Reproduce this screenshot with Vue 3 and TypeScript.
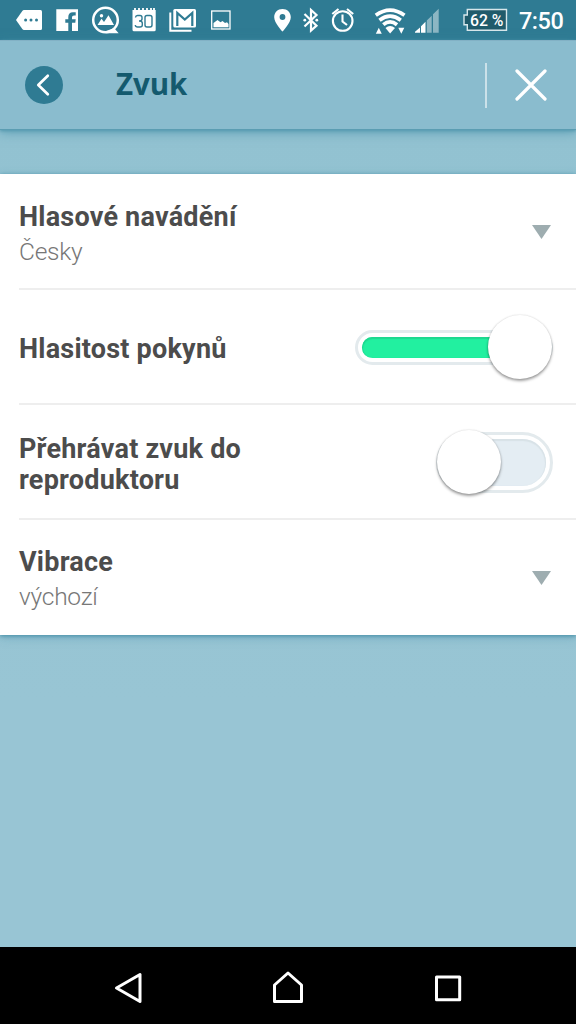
<script setup lang="ts">
import { ref } from 'vue'

interface Setting {
  id: string
  label: string
  value?: string
  kind: 'select' | 'slider' | 'toggle'
}

const settings = ref<Setting[]>([
  { id: 'voice', label: 'Hlasové navádění', value: 'Česky', kind: 'select' },
  { id: 'volume', label: 'Hlasitost pokynů', kind: 'slider' },
  { id: 'speaker', label: 'Přehrávat zvuk do reproduktoru', kind: 'toggle' },
  { id: 'vibration', label: 'Vibrace', value: 'výchozí', kind: 'select' },
])
</script>

<template>
  <div class="screen">
    <div class="status">
      <svg class="ic" width="250" height="40" viewBox="0 0 250 40" fill="#fff">
        <!-- message tag -->
        <path d="M24 10H40.500Q42 10 42 11.500V28.500Q42 30 40.500 30H24Q23 30 22.300 29L16 20L22.300 11Q23 10 24 10Z" />
        <g fill="#2f7b93"><circle cx="25.600" cy="20" r="1.500" /><circle cx="31" cy="20" r="1.500" /><circle cx="36.500" cy="20" r="1.500" /></g>
        <!-- facebook -->
        <path fill-rule="evenodd" d="M56.300 9.300H78V31H56.300ZM68.300 31H72V22.800H75.300L75.700 19.300H72V17.300Q72 15.500 74 15.500H75.700V12.300H73Q68.300 12.300 68.300 17V19.300H65.300V22.800H68.300Z" />
        <!-- photo bubble -->
        <circle cx="105.500" cy="20" r="12.300" fill="none" stroke="#fff" stroke-width="2.500" />
        <path d="M105 31.500L114 28L118.700 33.300H106Z" />
        <circle cx="101.500" cy="15.800" r="1.700" />
        <path d="M97.500 25L101.500 18.800L104 22L108.500 15.300L114 25Z" />
        <!-- calendar -->
        <path d="M132.500 10H155.700V29.700Q155.700 31.200 154.200 31.200H134Q132.500 31.200 132.500 29.700Z" />
        <path d="M135 8V12M139 8V12M143 8V12M147 8V12M151 8V12M154 8V12" stroke="#fff" stroke-width="1.800" />
        <g fill="none" stroke="#2f7b93" stroke-width="1.400">
          <path d="M135.500 17.500Q135.700 15.500 137.500 15.500H140Q142 15.500 142 17.500V19Q142 21 139 21Q142.300 21 142.300 23V25Q142.300 27 140 27H137.500Q135.500 27 135.300 25" />
          <rect x="145" y="15.500" width="7" height="11.500" rx="2" />
        </g>
        <!-- mail -->
        <rect x="173.300" y="9" width="22.700" height="18.600" rx="1.500" />
        <path d="M170.300 12.500V30.700H191.500" fill="none" stroke="#fff" stroke-width="2" />
        <path d="M177.300 26V13L184.800 19.500L192.300 13V26" fill="none" stroke="#2f7b93" stroke-width="2.200" />
        <!-- picture -->
        <rect x="211.700" y="11" width="18.300" height="18" fill="none" stroke="#fff" stroke-width="1.300" />
        <path d="M213.500 27.300V23L217.500 20L220.500 22.300L222.500 21L225 23L227 22.200L228.500 24V27.300Z" />
      </svg>
      <svg class="ic" width="262" height="40" viewBox="250 0 262 40" fill="#fff">
        <!-- location -->
        <path fill-rule="evenodd" d="M282.500 9C277.700 9 274.200 12.500 274.200 17.200C274.200 23 282.500 31.500 282.500 31.500C282.500 31.500 290.800 23 290.800 17.200C290.800 12.500 287.300 9 282.500 9ZM282.500 14.100A2.900 2.900 0 1 1 282.500 19.900A2.900 2.900 0 1 1 282.500 14.100Z" />
        <!-- bluetooth -->
        <path d="M304.500 14L316.500 25.700L311 30.500V10L316.500 15L304.500 26.500" fill="none" stroke="#fff" stroke-width="2.200" />
        <circle cx="304.800" cy="20.200" r="1.400" /><circle cx="316.800" cy="20.200" r="1.400" />
        <!-- alarm -->
        <g fill="none" stroke="#fff" stroke-width="2.100">
          <circle cx="342.700" cy="21" r="9.800" />
          <path d="M342.500 14.500V21.500L347 25" />
          <path d="M332.300 14L338.500 9M347 9L353.200 14" />
        </g>
        <!-- wifi -->
        <g fill="none" stroke="#fff" stroke-width="3.700">
          <path d="M375.800 15.300Q390 5 404.500 15.300" />
          <path d="M379.500 20.200Q390 12.200 400.800 20.200" />
          <path d="M383.300 24.700Q390 19 397 24.700" />
        </g>
        <path d="M385.500 28Q390 24 395 28L390.100 33.500Z" />
        <path d="M375.800 33.700L378.800 27.700L381.800 33.700ZM398.300 27.700H404.300L401.300 33.700Z" />
        <!-- signal -->
        <path d="M415 32.700V31.700L420 27.500V32.700ZM421 32.700V26.300L425.500 21.700V32.700Z" />
        <path d="M426.800 32.700V20.400L431.700 15.700V32.700ZM433 32.700V14.300L438.700 8.700V32.700Z" opacity=".45" />
        <!-- battery -->
        <path d="M467.300 9.500H506.500V30.300H467.300V24.700H464V15H467.300Z" fill="#205b6b" stroke="#d7e7eb" stroke-width="1.400" />
        <text class="battery" x="470" y="25.900" textLength="33.500" lengthAdjust="spacingAndGlyphs">62 %</text>
      </svg>
      <time class="clock">7:50</time>
    </div>

    <header class="header">
      <button class="back" aria-label="Zpět">
        <svg width="38" height="38" viewBox="0 0 38 38"><path d="M22.800 9.700L13.300 19L22.800 28.300" fill="none" stroke="#fff" stroke-width="2.700" stroke-linecap="round" stroke-linejoin="round" /></svg>
      </button>
      <h1>Zvuk</h1>
      <span class="separator"></span>
      <button class="close" aria-label="Zavřít">
        <svg width="32" height="32" viewBox="0 0 32 32"><path d="M2 2L30 30M30 2L2 30" stroke="#fff" stroke-width="3.200" stroke-linecap="round" /></svg>
      </button>
    </header>

    <main class="content">
      <section class="list">
        <div v-for="item in settings" :key="item.id" class="row">
          <div class="copy">
            <div class="label">{{ item.label }}</div>
            <div v-if="item.value" class="value">{{ item.value }}</div>
          </div>
          <svg v-if="item.kind === 'select'" class="arrow" width="19" height="14" viewBox="0 0 19 14"><path d="M0 0H19L9.500 14Z" fill="#9eadb0" /></svg>
          <div v-else class="control" :class="item.kind">
            <div class="track"><div class="fill"></div></div>
            <div class="knob"></div>
          </div>
        </div>
      </section>
    </main>

    <nav class="nav">
      <svg width="576" height="77" viewBox="0 947 576 77" fill="none" stroke="#fff" stroke-width="3" stroke-linejoin="round">
        <path d="M116.500 988L140 974.500V1001.500Z" />
        <path d="M274.500 1001.500V985L288 973L301.500 985V1001.500Z" />
        <rect x="436.500" y="977" width="23.200" height="22.700" />
      </svg>
    </nav>
  </div>
</template>

<style>
body { margin: 0; overflow: hidden; }
</style>

<style scoped>
.screen {
  width: 576px;
  height: 1024px;
  display: flex;
  flex-direction: column;
  overflow: hidden;
  font-family: Roboto, "Noto Sans", sans-serif;
  background: #98c5d4;
}
.status { height: 40px; flex: none; display: flex; background: #2f7b93; color: #fff; }
.ic { display: block; flex: none; }
.battery { font: 500 17px Roboto, sans-serif; }
.clock { margin-left: 7px; font-size: 23.5px; line-height: 42px; font-weight: 500; white-space: nowrap; letter-spacing: -.5px; }
.header {
  position: relative;
  z-index: 1;
  box-sizing: border-box;
  height: 90px;
  flex: none;
  display: flex;
  align-items: center;
  padding: 0 29px 0 25px;
  background: #8abcce;
  border-top: 1px solid #82b1c5;
  border-bottom: 1px solid #5b9db2;
  box-shadow: 0 1px 3px #5498af, 0 3px 10px rgba(65, 140, 165, .55);
}
button { border: 0; padding: 0; background: none; display: block; }
button svg { display: block; }
.back { width: 38px; height: 38px; border-radius: 50%; background: #2f7b93; }
h1 { margin: -3px 0 0 53px; font: 700 29.500px "Open Sans", sans-serif; letter-spacing: -.1px; color: #145a6e; }
.separator { width: 2px; height: 45px; margin-left: auto; background: #cbe1e9; }
.close { margin-left: 28px; }
.content { flex: 1; padding-top: 44px; background: linear-gradient(#92c2d1, #98c5d4 70%); }
.list { height: 461px; background: #fff; box-shadow: 0 1px 4px #468fa7, 0 3px 10px rgba(65, 140, 165, .3); }
.row {
  box-sizing: border-box;
  height: 115px;
  margin-left: 19px;
  padding-right: 23px;
  display: flex;
  align-items: center;
  justify-content: space-between;
  border-bottom: 2px solid #eee;
}
.row:first-child { height: 116px; }
.row:last-child { border-color: transparent; }
.copy { width: 260px; margin-top: 6px; }
.label { font-size: 27px; line-height: 31px; font-weight: 700; letter-spacing: .22px; color: #4c4c4c; }
.value { margin-top: 4px; font-size: 24.500px; line-height: 30px; font-weight: 300; letter-spacing: -.25px; color: #777; }
.arrow { margin: 2px 2px 0 0; }
.control { position: relative; display: flex; align-items: center; margin-top: 1px; }
.track { box-sizing: border-box; width: 100%; border: 3px solid #e3eaed; padding: 4px; }
.fill { height: 100%; }
.slider { width: 198px; height: 35px; }
.slider .track { height: 35px; border-radius: 18px; }
.slider .fill { border-radius: 12px; background: #22f0a0; box-shadow: inset 0 1px 1px 1px #1dd78f; }
.toggle { width: 117px; height: 61px; margin-top: 2px; }
.toggle .track { height: 61px; border-radius: 31px; }
.toggle .fill { border-radius: 24px; background: #e4edf3; box-shadow: inset 0 1px 1px 1px #d8e2e7; }
.knob {
  position: absolute;
  width: 64px;
  height: 64px;
  border-radius: 50%;
  background: #fff;
  box-shadow: 0 2px 3px rgba(0, 0, 0, .38), 0 0 2px rgba(0, 0, 0, .15);
}
.slider .knob { right: 1px; top: -15px; }
.toggle .knob { left: 1px; top: -2px; }
.nav { height: 77px; flex: none; background: #000; }
.nav svg { display: block; }
</style>
